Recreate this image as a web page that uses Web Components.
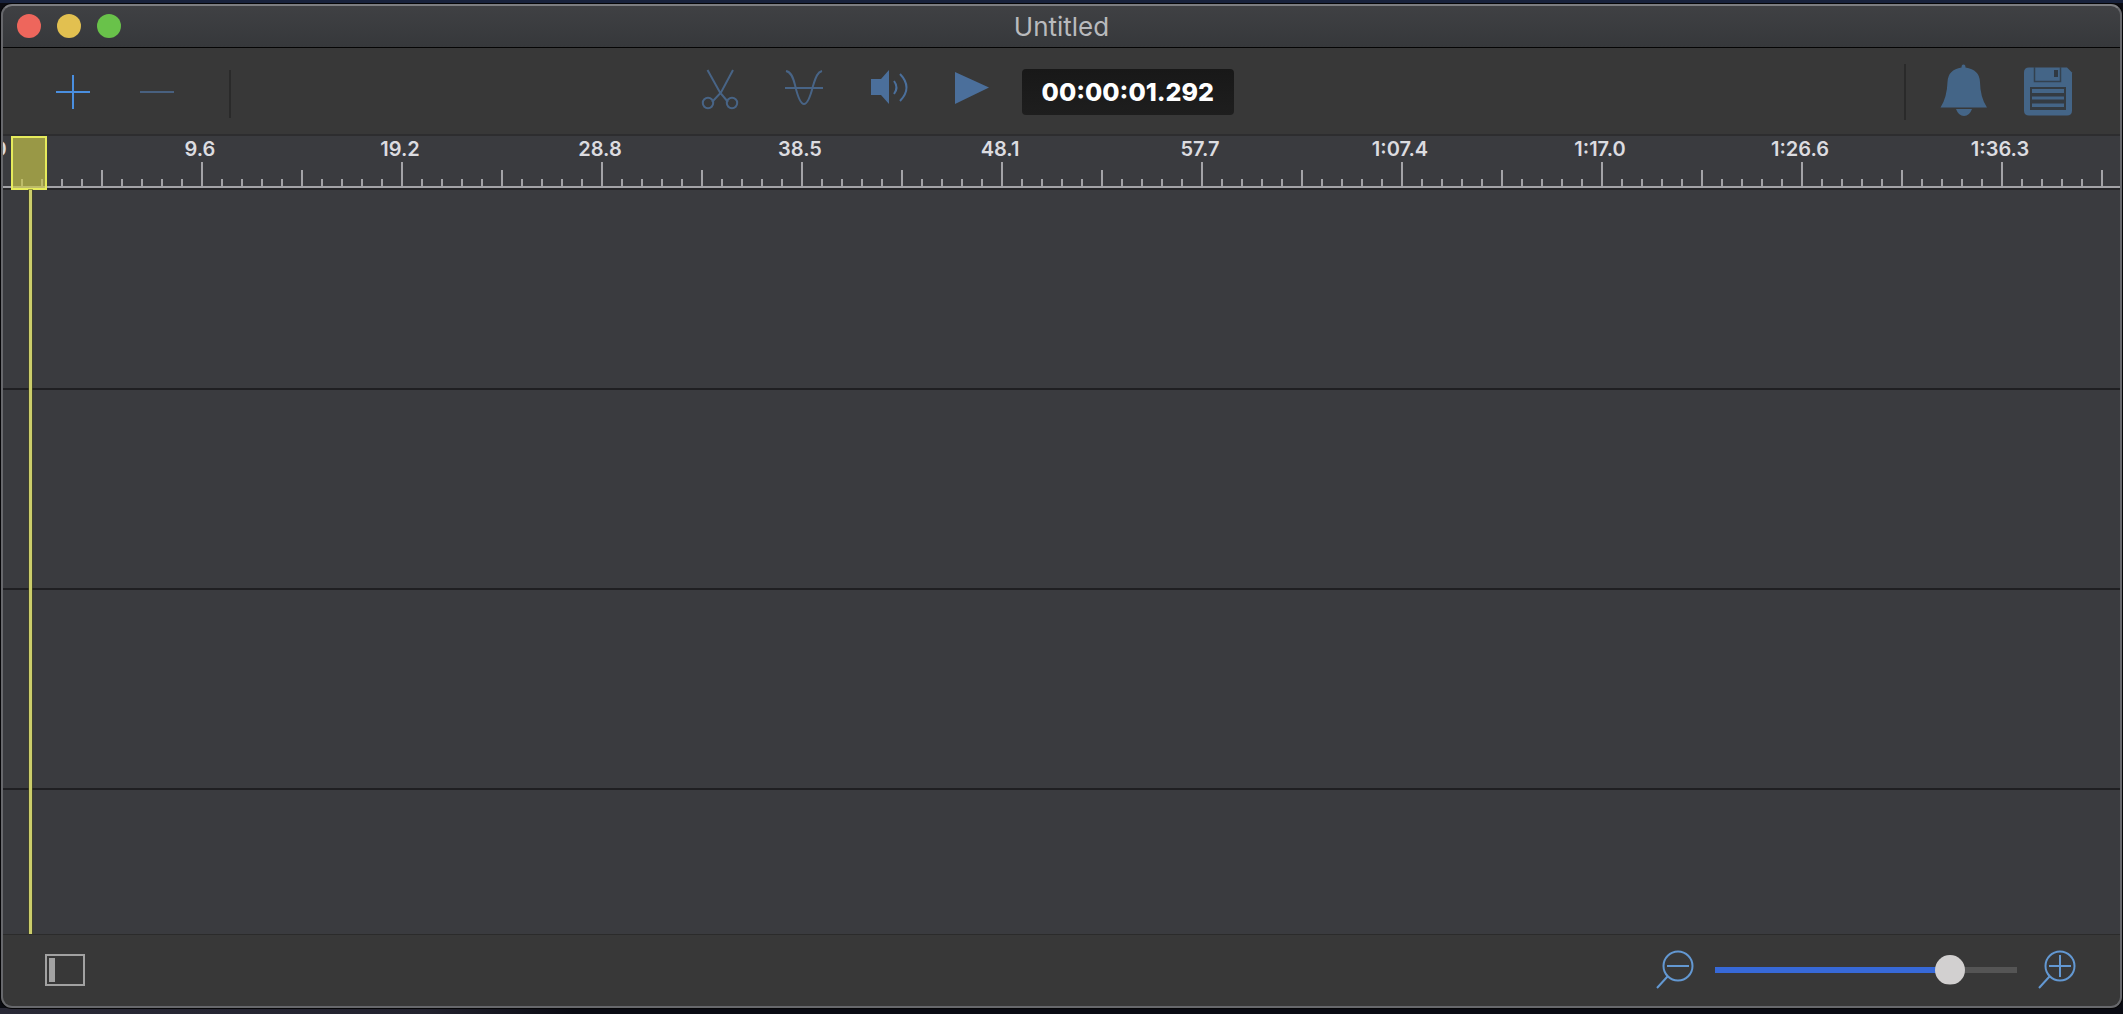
<!DOCTYPE html>
<html lang="en">
<head>
<meta charset="utf-8">
<title>Untitled</title>
<style>
html,body{height:100%;margin:0}
body{background:#0b0c12;font-family:Inter,"Liberation Sans",sans-serif;overflow:hidden}
</style>
</head>
<body>
<app-window>
  <title-bar slot="title">Untitled</title-bar>
  <tool-bar slot="toolbar">
    <tool-button icon="plus" label="Add track"></tool-button>
    <tool-button icon="minus" label="Remove track"></tool-button>
    <tool-divider class="left"></tool-divider>
    <tool-space grow="2"></tool-space>
    <tool-button icon="cut" label="Cut"></tool-button>
    <tool-button icon="wave" label="Fade"></tool-button>
    <tool-button icon="volume" label="Volume"></tool-button>
    <tool-button icon="play" label="Play"></tool-button>
    <time-code>00:00:01.292</time-code>
    <tool-space grow="3"></tool-space>
    <tool-divider class="right"></tool-divider>
    <tool-button icon="bell" label="Notifications"></tool-button>
    <tool-button icon="save" label="Save"></tool-button>
  </tool-bar>
  <time-line slot="content" labels="0 9.6 19.2 28.8 38.5 48.1 57.7 1:07.4 1:17.0 1:26.6 1:36.3"></time-line>
  <status-bar slot="status"></status-bar>
</app-window>
<script>
const part = (name, html, setup) => customElements.define(name, class extends HTMLElement {
  constructor() { super(); this.attachShadow({ mode: 'open' }); }
  connectedCallback() {
    this.shadowRoot.innerHTML = html;
    if (setup) setup(this, this.shadowRoot);
  }
});

part('app-window', `<style>
:host{display:flex;box-sizing:border-box;height:100vh;padding:4px 1px 6px;background:linear-gradient(90deg,#292936,#22222e 20%,#090a12 27%) bottom/100% 6px no-repeat,linear-gradient(#18223c,#18223c) top/100% 3px no-repeat}
.frame{position:relative;flex:1;min-width:0;display:flex;flex-direction:column;border-radius:11px;overflow:hidden;background:#383838;box-shadow:0 0 0 1px #050507}
.frame::after{content:"";position:absolute;inset:0;border:2px solid #67686c;border-top-color:#7c7d81;border-radius:11px;pointer-events:none}
slot[name=content]::slotted(*){flex:1;min-height:0}
</style><div class="frame"><slot name="title"></slot><slot name="toolbar"></slot><slot name="content"></slot><slot name="status"></slot></div>`);

part('title-bar', `<style>
:host{display:grid;grid-template-columns:1fr auto 1fr;align-items:center;height:43px;background:linear-gradient(#404144,#36383b);border-bottom:1px solid #050505}
.lights{display:flex;gap:16px;padding-left:16px}
button{width:24px;height:24px;padding:0;border:0;border-radius:50%}
.close{background:#ee665c}.min{background:#e2c050}.max{background:#69c24a}
h1{margin:0;padding-top:2px;font-size:26px;line-height:32px;font-weight:400;color:#b9babd}
</style><div class="lights"><button class="close" aria-label="Close"></button><button class="min" aria-label="Minimize"></button><button class="max" aria-label="Zoom"></button></div><h1><slot></slot></h1>`);

part('tool-bar', `<style>
:host{display:flex;align-items:center;height:84px;padding:2px 32px 0 30px;background:#383838;border-bottom:2px solid #2d2d2f}
</style><slot></slot>`);

part('tool-space', `<style>:host{display:block}</style>`, el => { el.style.flexGrow = el.getAttribute('grow'); });

part('tool-divider', `<style>
:host{display:block;width:2px;height:48px;background:#2a2a2a}
:host(.left){margin-left:30px;margin-top:4px}
:host(.right){height:56px;margin-right:16px}
</style>`);

part('time-code', `<style>
:host{display:block;margin-left:8px}
output{display:block;box-sizing:border-box;width:212px;height:46px;line-height:46px;text-align:center;border-radius:4px;background:linear-gradient(#181818,#1e1e1e);color:#fff;font-size:25px;font-weight:800}
</style><output aria-label="Current time"><slot></slot></output>`);

const icons = {
  plus: '<path d="M25 43h34M42 26v34" stroke="#4a8fe0" stroke-width="2"/>',
  minus: '<path d="M25 43h34" stroke="#48607f" stroke-width="2"/>',
  cut: '<g stroke="#486486" stroke-width="2" fill="none"><path d="M29.500 21L42 43.500L50 53M55 21L43 43.500L34 53"/><circle cx="30" cy="54" r="5.200"/><circle cx="54" cy="54" r="5.200"/></g>',
  wave: '<g stroke="#486486" stroke-width="2" fill="none"><path d="M23 39h38M24 22C29 23 31 28 33 36C36 49 39 55 42 55S48 49 51 37C54 27 56 23 60 22"/></g>',
  volume: '<path d="M25 30h10l8-9v34l-8-9H25z" fill="#4b6f9b"/><g stroke="#4b6f9b" stroke-width="2" fill="none"><path d="M48 32q5 6.500 0 13M54 25q13 13.500 0 27"/></g>',
  play: '<path d="M25 23L59 38.500L25 55z" fill="#4b6f9b"/>',
  bell: '<path d="M39.500 18.500q0-3 2-3t2 3q14 2 14.500 14.500q.2 15.500 7 25.500H18.500q6.500-10 7-25.500Q26 20.500 39.500 18.500z" fill="#446587"/><path d="M34 60h16q-2.500 7-8 7t-8-7z" fill="#446587"/>',
  save: '<path d="M23 18.500h38l5 5v38q0 5-5 5H23q-5 0-5-5v-38q0-5 5-5z" fill="#446587"/><path d="M28.500 18v14.500h26V18" stroke="#33414f" stroke-width="1.500" fill="none"/><path d="M48 21h4v7h-4z" fill="#303942"/><path d="M24 38h36v23H24z" fill="#343b42"/><path d="M26 40h32v4H26zM26 47.500h32v3H26zM26 54.500h32v3.500H26z" fill="#446587"/>'
};
part('tool-button', `<style>
:host{display:block}
button{display:block;width:84px;height:86px;padding:0;border:0;background:none}
svg{display:block}
</style><button></button>`, (el, root) => {
  const b = root.querySelector('button');
  b.setAttribute('aria-label', el.getAttribute('label'));
  b.innerHTML = `<svg width="84" height="86" viewBox="0 0 84 86">${icons[el.getAttribute('icon')]}</svg>`;
});

part('time-line', `<style>
:host{display:flex;flex-direction:column;position:relative;overflow:hidden;background:#3a3b3f}
.labels{display:flex;margin-left:-101px}
.labels span{flex:0 0 200px;text-align:center;font-size:20px;line-height:26px;font-weight:600;color:#dcdce0}
.ticks{flex:none;height:24px;border-bottom:2px solid #a3a3a7;box-shadow:0 2px #252528;
 background:
 repeating-linear-gradient(90deg,#a3a3a7 0 2px,transparent 2px 200px) bottom/100% 24px no-repeat,
 repeating-linear-gradient(90deg,#a3a3a7 0 2px,transparent 2px 100px) bottom/100% 16px no-repeat,
 repeating-linear-gradient(90deg,#a3a3a7 0 2px,transparent 2px 20px) bottom/100% 7px no-repeat}
.tracks{flex:1;min-height:0;margin-top:2px;overflow:hidden}
.track{box-sizing:border-box;height:200px;border-bottom:2px solid #1f1f22}
.playhead{position:absolute;left:10px;top:0;bottom:0;width:36px;display:flex;flex-direction:column}
.handle{box-sizing:border-box;height:54px;border:2px solid #e6eb5c;background:rgba(204,200,75,.66)}
.stem{flex:1;width:3px;margin-left:18px;background:#cbcd6b;box-shadow:0 0 0 1px rgba(70,72,30,.5)}
</style><div class="labels"></div><div class="ticks"></div>
<div class="tracks"><div class="track"></div><div class="track"></div><div class="track"></div><div class="track"></div></div>
<div class="playhead"><div class="handle"></div><div class="stem"></div></div>`, (el, root) => {
  root.querySelector('.labels').innerHTML = el.getAttribute('labels').split(' ').map(t => `<span>${t}</span>`).join('');
});

const lens = extra => `<svg width="40" height="40" viewBox="0 0 40 40" fill="none" stroke="#6398d2" stroke-width="2"><circle cx="23" cy="16" r="14.500"/><path d="M12.500 26.500L2 38M12 16h22${extra}"/></svg>`;
part('status-bar', `<style>
:host{display:flex;align-items:center;height:74px;box-sizing:border-box;padding:0 45px 4px 44px;border-top:1px solid #2b2b2b;background:#383838}
button{flex:none;padding:0;border:0;background:none}
svg{display:block}
.zoom{display:flex;align-items:center;margin-left:auto;gap:20px}
input{appearance:none;width:302px;height:30px;margin:0;background:linear-gradient(90deg,#3769d8 0 80%,#555 80%) center/100% 6px no-repeat;clip-path:inset(0 round 3px)}
input::-webkit-slider-thumb{appearance:none;width:30px;height:30px;border-radius:50%;background:#d2d0d0}
</style><button aria-label="Toggle sidebar"><svg width="40" height="32" viewBox="0 0 40 32"><path d="M1 1h38v30H1z" fill="none" stroke="#a2a2a2" stroke-width="2"/><path d="M4 4h6v24H4z" fill="#a2a2a2"/></svg></button>
<div class="zoom"><button aria-label="Zoom out">${lens('')}</button><input type="range" aria-label="Zoom level" min="0" max="100" value="81"><button aria-label="Zoom in">${lens('M23 5v22')}</button></div>`);
</script>
</body>
</html>
